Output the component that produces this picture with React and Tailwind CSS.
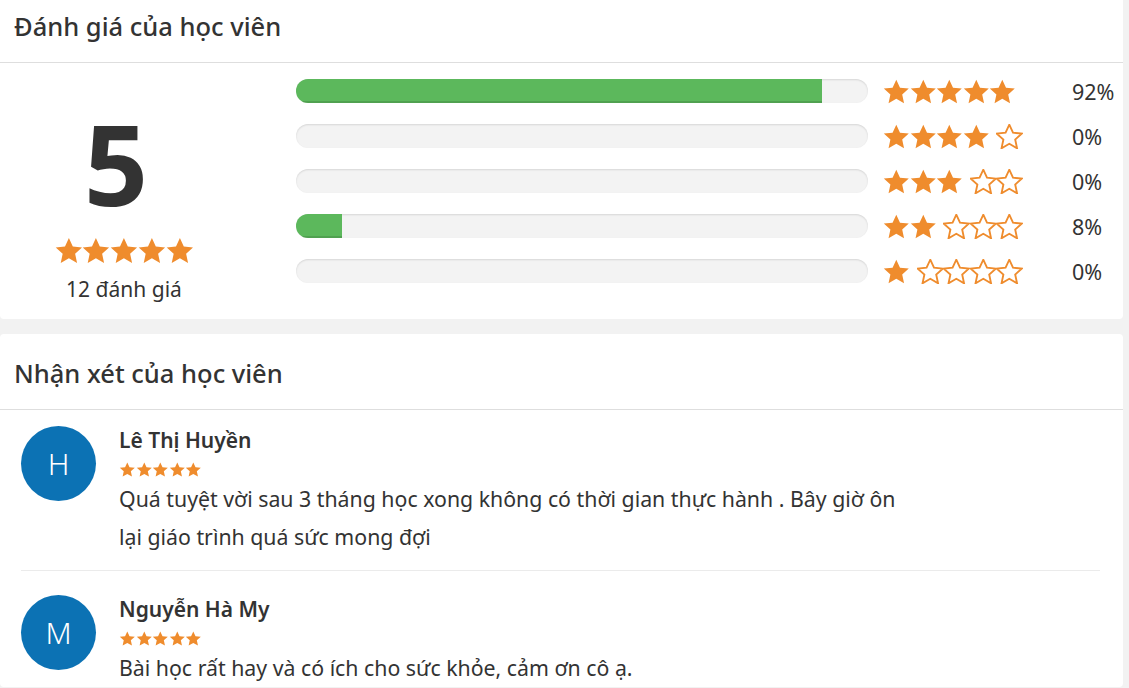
const ratings = [
  { stars: 5, pct: 92 },
  { stars: 4, pct: 0 },
  { stars: 3, pct: 0 },
  { stars: 2, pct: 8 },
  { stars: 1, pct: 0 },
]

const reviews = [
  {
    initial: 'H',
    name: 'Lê Thị Huyền',
    text: 'Quá tuyệt vời sau 3 tháng học xong không có thời gian thực hành . Bây giờ ôn lại giáo trình quá sức mong đợi',
  },
  {
    initial: 'M',
    name: 'Nguyễn Hà My',
    text: 'Bài học rất hay và có ích cho sức khỏe, cảm ơn cô ạ.',
  },
]

const STAR = '12,1.2 15.2,8.1 22.8,8.9 17.1,14 18.7,21.6 12,17.7 5.3,21.6 6.9,14 1.2,8.9 8.8,8.1'

function Star({ filled = true, className = '' }) {
  return (
    <svg viewBox="0.6 0.6 22.8 21.6" className={className}>
      {filled ? (
        <polygon points={STAR} fill="#ef8c2d" />
      ) : (
        <polygon points={STAR} fill="#fff" stroke="#ef8c2d" strokeWidth="1.6" strokeLinejoin="miter" />
      )}
    </svg>
  )
}

function StarRow({ count }) {
  return (
    <div className="flex items-center">
      {[0, 1, 2, 3, 4].map(i => (
        <Star
          key={i}
          filled={i < count}
          className={`w-[26.6px] h-[25px] ${i === count ? 'ml-[7px]' : ''}`}
        />
      ))}
    </div>
  )
}

export default function App() {
  return (
    <div className="min-h-screen bg-[#f2f2f2] text-[#333] overflow-hidden" style={{ fontFamily: '"Noto Sans", "Open Sans", sans-serif' }}>
      <div className="w-[1123px] -mt-[13px] flex flex-col gap-[15px]">

        {/* Ratings summary */}
        <section className="bg-white rounded-[4px]">
          <div className="h-[76px] flex items-center px-[14px] pt-[3px] border-b border-[#dedede]">
            <h2 className="text-[25.5px] font-medium">Đánh giá của học viên</h2>
          </div>
          <div className="flex pt-[16px] pb-[17px]">
            <div className="w-[248px] flex flex-col items-center pt-[28px]">
              <div className="text-[112px] leading-none font-bold text-[#333] -ml-[16px]">5</div>
              <div className="flex mt-[18px]">
                {[0, 1, 2, 3, 4].map(i => (
                  <Star key={i} className="w-[27.8px] h-[27px]" />
                ))}
              </div>
              <div className="text-[21px] mt-[12px] leading-[26px]">12 đánh giá</div>
            </div>
            <div className="flex-1 flex flex-col gap-[21px] pl-[48px]">
              {ratings.map(r => (
                <div key={r.stars} className="flex items-center h-[24px]">
                  <div className="w-[572px] h-[24px] rounded-full bg-[#f3f3f3] shadow-[inset_0_1px_2px_rgba(0,0,0,0.12)] overflow-hidden">
                    <div
                      className="h-full bg-[#5cb85c] shadow-[inset_0_-2px_0_rgba(0,0,0,0.12)]"
                      style={{ width: `${r.pct}%` }}
                    />
                  </div>
                  <div className="w-[204px] pl-[15px]">
                    <StarRow count={r.stars} />
                  </div>
                  <div className="text-[21.5px] pt-[2px]">{r.pct}%</div>
                </div>
              ))}
            </div>
          </div>
        </section>

        {/* Reviews */}
        <section className="bg-white rounded-[4px]">
          <div className="h-[76px] flex items-center px-[14px] pt-[3px] border-b border-[#dedede]">
            <h2 className="text-[25.5px] font-medium">Nhận xét của học viên</h2>
          </div>
          <div className="px-[21px] pt-[16px]">
            {reviews.map((rv, idx) => (
              <div
                key={rv.name}
                className={`flex gap-[23px] mr-[2px] ${idx === 0 ? 'pb-[14px] border-b border-[#ebebeb]' : 'pt-[24px]'}`}
              >
                <div className="w-[75px] h-[75px] rounded-full bg-[#0c72b4] text-white flex items-center justify-center text-[30px] font-light shrink-0">
                  {rv.initial}
                </div>
                <div className="-mt-[1px]">
                  <div className="text-[21px] font-semibold leading-[30px]">{rv.name}</div>
                  <div className="flex mt-[7px] mb-[3px]">
                    {[0, 1, 2, 3, 4].map(i => (
                      <Star key={i} className="w-[16.6px] h-[15px]" />
                    ))}
                  </div>
                  <p className="text-[21.3px] leading-[38px] max-w-[800px]">{rv.text}</p>
                </div>
              </div>
            ))}
          </div>
        </section>
      </div>
    </div>
  )
}
